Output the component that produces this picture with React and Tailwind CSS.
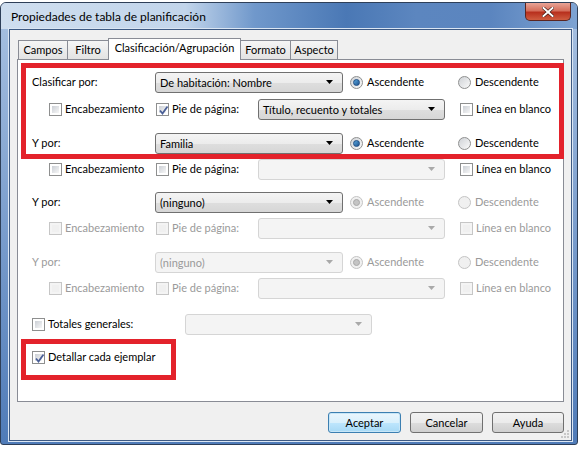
import React from "react";

const font = "font-['Lato',sans-serif]";

function Check({ checked, disabled }) {
  return (
    <span
      className={`relative flex w-[13px] h-[13px] shrink-0 border ${
        disabled ? "border-[#c6c6c6] bg-[#f4f4f4]" : "border-[#8e8f8f] bg-white"
      }`}
    >
      <span
        className={`absolute inset-[2px] ${
          disabled
            ? "bg-[#f0f0f0]"
            : "bg-gradient-to-br from-[#cbcfd5] to-[#f7f7f7]"
        }`}
      />
      {checked && (
        <svg className="absolute left-[1px] top-[1px]" width="11" height="11" viewBox="0 0 11 11">
          <path d="M2 5.5 L4.5 8.5 L9.5 1.5" fill="none" stroke="#4a5f97" strokeWidth="1.8" />
        </svg>
      )}
    </span>
  );
}

function Radio({ checked, disabled }) {
  return (
    <span
      className={`relative flex w-[13px] h-[13px] shrink-0 rounded-full border ${
        disabled
          ? "border-[#c4c4c4] bg-[#f0f0f0]"
          : "border-[#8e8f8f] bg-gradient-to-br from-[#cfd2d6] to-[#fafafa]"
      }`}
    >
      {checked && (
        <span
          className={`absolute left-[2px] top-[2px] w-[7px] h-[7px] rounded-full border ${
            disabled
              ? "border-[#a8a8a8] bg-[#c4c4c4]"
              : "border-[#1c4c83] bg-gradient-to-br from-[#5aa6dc] to-[#1f5591]"
          }`}
        />
      )}
    </span>
  );
}

function Select({ value, disabled, className }) {
  return (
    <div
      className={`flex items-center justify-between h-[21px] rounded-[3px] border pl-[4px] pr-[8px] ${
        disabled
          ? "border-[#d5d5d5] bg-[#f4f4f4] text-[#9a9a9a]"
          : "border-[#707070] bg-[linear-gradient(#f4f4f4_0%,#ececec_50%,#dedede_51%,#d6d6d6_100%)] text-black"
      } ${className}`}
    >
      <span className="leading-none">{value}</span>
      <svg width="8" height="5" viewBox="0 0 8 5">
        <path d="M0 0 H7 L3.5 4 Z" fill={disabled ? "#a9a9a9" : "#000"} />
      </svg>
    </div>
  );
}

function RowA({ label, value, dim, selDisabled, radiosDisabled, mt }) {
  const tc = dim ? "text-[#9a9a9a]" : "text-black";
  const rc = radiosDisabled ? "text-[#9a9a9a]" : "text-black";
  return (
    <div className={`flex items-center h-[21px] ${mt}`}>
      <span className={`w-[129px] pl-[6px] ${tc}`}>{label}</span>
      <Select className="w-[188px]" value={value} disabled={selDisabled} />
      <div className="ml-[7px] w-[108px] flex items-center gap-[4px]">
        <Radio checked disabled={radiosDisabled} />
        <span className={rc}>Ascendente</span>
      </div>
      <div className="flex items-center gap-[4px]">
        <Radio disabled={radiosDisabled} />
        <span className={rc}>Descendente</span>
      </div>
    </div>
  );
}

function RowB({ pie, pieVal, dim, mt }) {
  const tc = dim ? "text-[#9a9a9a]" : "text-black";
  return (
    <div className={`flex items-center h-[21px] ${mt}`}>
      <div className="w-[130px] pl-[23px] flex items-center gap-[3px]">
        <Check disabled={dim} />
        <span className={tc}>Encabezamiento</span>
      </div>
      <div className="w-[102px] flex items-center gap-[3px]">
        <Check checked={pie} disabled={dim} />
        <span className={tc}>Pie de página:</span>
      </div>
      <Select className="w-[187px]" value={pieVal} disabled={!pieVal} />
      <div className="ml-[15px] flex items-center gap-[3px]">
        <Check disabled={dim} />
        <span className={tc}>Línea en blanco</span>
      </div>
    </div>
  );
}

const tabBase =
  "flex items-center justify-center border border-[#898c95] border-b-0 text-black";

export default function App() {
  return (
    <div className={`w-[581px] h-[449px] bg-white pt-[2px] text-[11px] ${font}`}>
      <div className="w-[578px] h-[443px] flex flex-col rounded-t-[6px] rounded-b-[3px] border border-[#2e3f58] bg-gradient-to-b from-[#a9c2e2] to-[#4f7bb8] pl-[8px] pr-[5px] pb-[3px]">
        {/* title bar */}
        <div className="-ml-[8px] -mr-[5px] h-[26px] flex justify-between rounded-t-[5px] bg-[linear-gradient(to_right,#cfdeef_0%,#c2d5eb_32%,#7098cb_44%,#4a78b5_60%,#5c86bf_72%,#5b85bf_85%,#7ea3d2_100%)]">
          <span className="self-center pl-[10px] pt-[1px] text-[12px] text-black">
            Propiedades de tabla de planificación
          </span>
          <div className="mr-[6px] w-[46px] h-[18px] flex items-center justify-center rounded-b-[5px] border border-t-0 border-[#5b2520] bg-[linear-gradient(#e8a497_0%,#d56f5c_45%,#b8301e_55%,#cf5d40_100%)]">
            <svg width="12" height="10" viewBox="0 0 12 10">
              <path d="M1.5 1 L10.5 9 M10.5 1 L1.5 9" stroke="#3a1410" strokeWidth="3.2" strokeLinecap="square" />
              <path d="M1.5 1 L10.5 9 M10.5 1 L1.5 9" stroke="#ffffff" strokeWidth="2" strokeLinecap="square" />
            </svg>
          </div>
        </div>

        {/* client area */}
        <div className="relative flex-1 flex flex-col border border-[#3d5a84] bg-[#f0f0f0] shadow-[0_0_0_1px_#dbe6f3]">
          {/* tabs */}
          <div className="mt-[8px] ml-[8px] h-[21px] flex items-end">
            <div className={`${tabBase} w-[50px] h-[19px] bg-gradient-to-b from-[#f5f5f5] to-[#e3e3e3]`}>Campos</div>
            <div className={`${tabBase} border-l-0 w-[41px] h-[19px] bg-gradient-to-b from-[#f5f5f5] to-[#e3e3e3]`}>Filtro</div>
            <div className={`${tabBase} relative z-10 -ml-[1px] -mb-[1px] w-[133px] h-[22px] bg-white pb-[3px]`}>
              Clasificación/Agrupación
            </div>
            <div className={`${tabBase} -ml-[1px] w-[51px] h-[19px] bg-gradient-to-b from-[#f5f5f5] to-[#e3e3e3]`}>Formato</div>
            <div className={`${tabBase} border-l-0 w-[47px] h-[19px] bg-gradient-to-b from-[#f5f5f5] to-[#e3e3e3]`}>Aspecto</div>
          </div>

          {/* panel */}
          <div className="mx-[7px] h-[343px] border border-[#898c95] bg-white pl-[3px]">
            <div className="mt-[3px] -mr-[1px] border-[5px] border-[#e3222b] pt-[4px]">
              <RowA label="Clasificar por:" value="De habitación: Nombre" mt="" />
              <RowB pie pieVal="Título, recuento y totales" mt="mt-[6px]" />
              <RowA label="Y por:" value="Familia" mt="mt-[13px]" />
            </div>
            <div className="pl-[5px]">
              <RowB mt="" />
              <RowA label="Y por:" value="(ninguno)" radiosDisabled mt="mt-[12px]" />
              <RowB dim mt="mt-[5px]" />
              <RowA label="Y por:" value="(ninguno)" dim selDisabled radiosDisabled mt="mt-[13px]" />
              <RowB dim mt="mt-[5px]" />
              <div className="mt-[15px] flex items-center h-[21px]">
                <div className="w-[159px] pl-[6px] flex items-center gap-[3px]">
                  <Check />
                  <span>Totales generales:</span>
                </div>
                <Select className="w-[187px]" value="" disabled />
              </div>
            </div>
            <div className="mt-[4px] w-[155px] border-[5px] border-[#e3222b] pt-[3px] pb-[7px]">
              <div className="h-[21px] pl-[6px] flex items-center gap-[3px]">
                <Check checked />
                <span>Detallar cada ejemplar</span>
              </div>
            </div>
          </div>

          {/* buttons */}
          <div className="mt-[10px] pr-[7px] flex justify-end gap-[9px]">
            <button className="w-[73px] h-[21px] rounded-[3px] border border-[#3c7fb1] bg-[linear-gradient(#eaf6fd_0%,#d9f0fc_50%,#bee6fd_51%,#a7d9f5_100%)] shadow-[inset_0_0_0_1px_#c7e6f7] text-black leading-none">
              Aceptar
            </button>
            <button className="w-[73px] h-[21px] rounded-[3px] border border-[#707070] bg-[linear-gradient(#f2f2f2_0%,#ebebeb_50%,#dddddd_51%,#cfcfcf_100%)] text-black leading-none">
              Cancelar
            </button>
            <button className="w-[72px] h-[21px] rounded-[3px] border border-[#707070] bg-[linear-gradient(#f2f2f2_0%,#ebebeb_50%,#dddddd_51%,#cfcfcf_100%)] text-black leading-none">
              Ayuda
            </button>
          </div>

          {/* resize grip */}
          <svg className="absolute right-[1px] bottom-[1px]" width="10" height="10" viewBox="0 0 10 10">
            <rect x="7" y="1" width="2" height="2" fill="#c8c8c8" />
            <rect x="4" y="4" width="2" height="2" fill="#c8c8c8" />
            <rect x="7" y="4" width="2" height="2" fill="#c8c8c8" />
            <rect x="1" y="7" width="2" height="2" fill="#c8c8c8" />
            <rect x="4" y="7" width="2" height="2" fill="#c8c8c8" />
            <rect x="7" y="7" width="2" height="2" fill="#c8c8c8" />
          </svg>
        </div>
      </div>
    </div>
  );
}
